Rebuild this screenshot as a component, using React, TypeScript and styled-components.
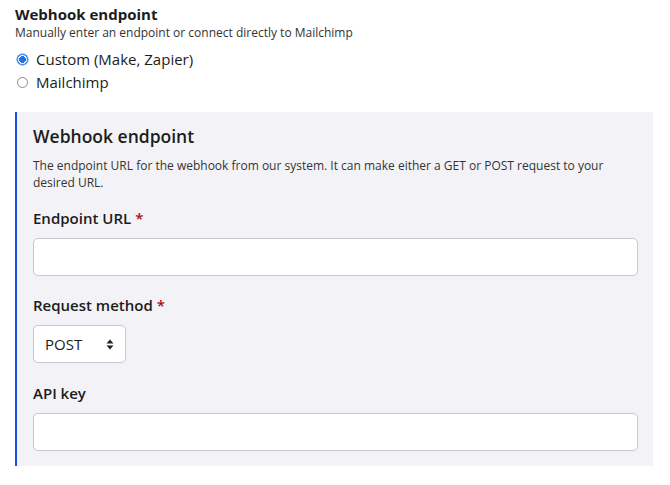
import React from "react";
import styled, { createGlobalStyle } from "styled-components";

const Global = createGlobalStyle`
  html, body { margin: 0; padding: 0; background: #fff; }
  body { font-family: "Open Sans", "Noto Sans", sans-serif; color: #1d1d1f; }
  * { box-sizing: border-box; }
`;

const Page = styled.div`
  width: 670px;
  padding: 4px 17px 0 15px;
`;

const Title = styled.div`
  font-size: 15px;
  font-weight: 700;
  line-height: 20px;
  color: #1c1c1c;
`;

const Hint = styled.div`
  font-size: 12px;
  line-height: 17px;
  color: #333;
`;

const RadioList = styled.div`
  display: flex;
  flex-direction: column;
  gap: 2px;
  margin-top: 8px;
`;

const RadioRow = styled.label`
  display: flex;
  align-items: center;
  gap: 8px;
  font-size: 15px;
  line-height: 21px;
  color: #1c1c1c;
  padding-left: 2px;
`;

const Radio = styled.input.attrs({ type: "radio" })`
  appearance: none;
  margin: 0;
  width: 11px;
  height: 11px;
  border-radius: 50%;
  border: 1px solid #8a8a8a;
  background: #fff;
  &:checked {
    border-color: #1a73e8;
    background: radial-gradient(circle, #1a73e8 0 3.2px, #fff 3.6px);
    box-shadow: 0 0 0 0.5px #1a73e8;
  }
`;

const Panel = styled.section`
  margin-top: 19px;
  width: 638px;
  background: #f3f3f7;
  border-left: 2px solid #1a4fd6;
  padding: 12px 15px 15px 16px;
`;

const PanelTitle = styled.h2`
  margin: 0;
  font-size: 17.5px;
  font-weight: 600;
  line-height: 24px;
  color: #1c1c1c;
`;

const PanelText = styled.p`
  margin: 9px 0 0;
  font-size: 12px;
  line-height: 17px;
  color: #333;
`;

const Field = styled.div<{ $gap: number }>`
  display: flex;
  flex-direction: column;
  margin-top: ${(p) => p.$gap}px;
`;

const Label = styled.div`
  font-size: 15px;
  font-weight: 600;
  line-height: 20px;
  color: #1c1c1c;
  margin-bottom: 10px;
`;

const Req = styled.span`
  color: #b00d0d;
  margin-left: 4px;
`;

const TextInput = styled.input`
  width: 605px;
  height: 38px;
  border: 1px solid #c8c8cc;
  border-radius: 5px;
  background: #fff;
  font: inherit;
`;

const SelectBox = styled.div`
  width: 93px;
  height: 38px;
  border: 1px solid #c8c8cc;
  border-radius: 5px;
  background: #fff;
  display: flex;
  align-items: center;
  justify-content: space-between;
  padding: 0 11px;
  font-size: 15px;
  color: #1c1c1c;
`;

const Arrows = () => (
  <svg width="8" height="11" viewBox="0 0 8 11">
    <path d="M4 0.5 L7.5 4.5 H0.5 Z M4 10.5 L7.5 6.5 H0.5 Z" fill="#222" />
  </svg>
);

export default function App() {
  return (
    <Page>
      <Global />
      <Title>Webhook endpoint</Title>
      <Hint>Manually enter an endpoint or connect directly to Mailchimp</Hint>
      <RadioList>
        <RadioRow>
          <Radio name="ep" defaultChecked />
          Custom (Make, Zapier)
        </RadioRow>
        <RadioRow>
          <Radio name="ep" />
          Mailchimp
        </RadioRow>
      </RadioList>
      <Panel>
        <PanelTitle>Webhook endpoint</PanelTitle>
        <PanelText>
          The endpoint URL for the webhook from our system. It can make either a GET or POST request to your
          desired URL.
        </PanelText>
        <Field $gap={17}>
          <Label>
            Endpoint URL<Req>*</Req>
          </Label>
          <TextInput />
        </Field>
        <Field $gap={19}>
          <Label>
            Request method<Req>*</Req>
          </Label>
          <SelectBox>
            POST
            <Arrows />
          </SelectBox>
        </Field>
        <Field $gap={20}>
          <Label>API key</Label>
          <TextInput />
        </Field>
      </Panel>
    </Page>
  );
}
